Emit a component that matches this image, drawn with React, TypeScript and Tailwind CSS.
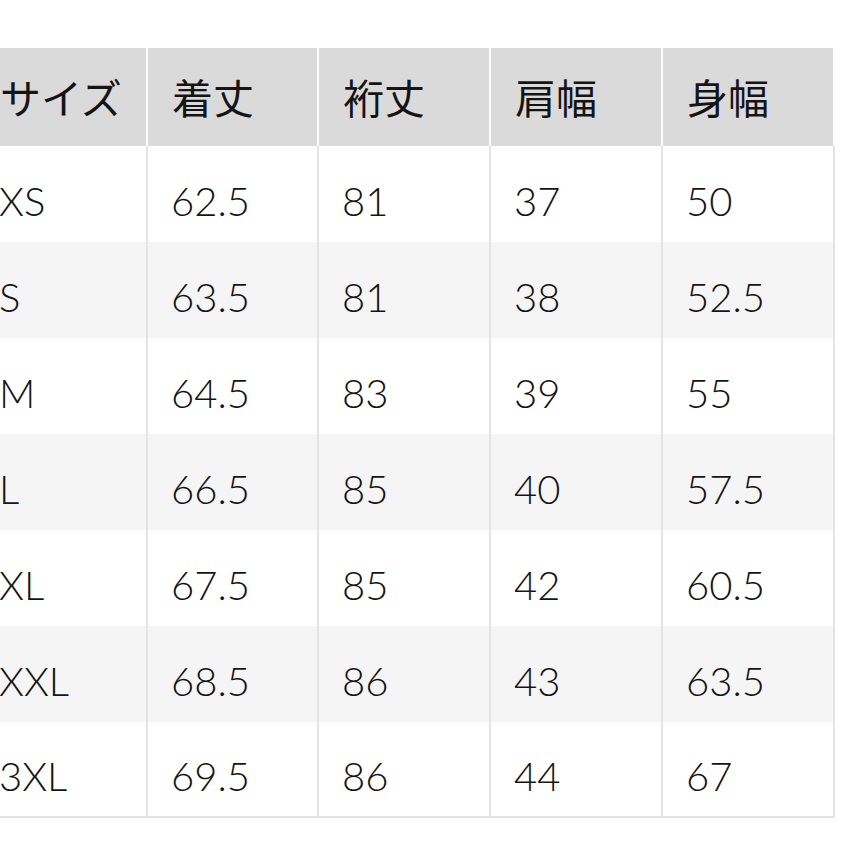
const headers = ["サイズ", "着丈", "裄丈", "肩幅", "身幅"]

const rows = [
  ["XS", "62.5", "81", "37", "50"],
  ["S", "63.5", "81", "38", "52.5"],
  ["M", "64.5", "83", "39", "55"],
  ["L", "66.5", "85", "40", "57.5"],
  ["XL", "67.5", "85", "42", "60.5"],
  ["XXL", "68.5", "86", "43", "63.5"],
  ["3XL", "69.5", "86", "44", "67"],
]

const font = { fontFamily: '"Lato", "Noto Sans CJK JP", sans-serif' }

export default function App() {
  return (
    <div className="w-[852px] h-[852px] overflow-hidden bg-white" style={font}>
      <div className="mt-[48px] ml-[-24px] w-[860px] grid grid-cols-[172px_171px_172px_172px_172px] text-[#141414]">
        {headers.map((h) => (
          <div
            key={h}
            className="h-[98px] bg-[#dadada] border-r-2 border-white flex items-center pl-[24px] pt-[4px] text-[41px] font-normal"
          >
            {h}
          </div>
        ))}
        {rows.map((row, i) =>
          row.map((cell, j) => (
            <div
              key={`${i}-${j}`}
              className={`h-[96px] border-r-2 border-[#e4e4e4] flex items-center pl-[23px] pt-[13px] text-[40px] font-light ${
                i % 2 === 1 ? "bg-[#f5f5f5]" : "bg-white"
              } ${i === rows.length - 1 ? "border-b-2" : ""}`}
            >
              {cell}
            </div>
          )),
        )}
      </div>
    </div>
  )
}
